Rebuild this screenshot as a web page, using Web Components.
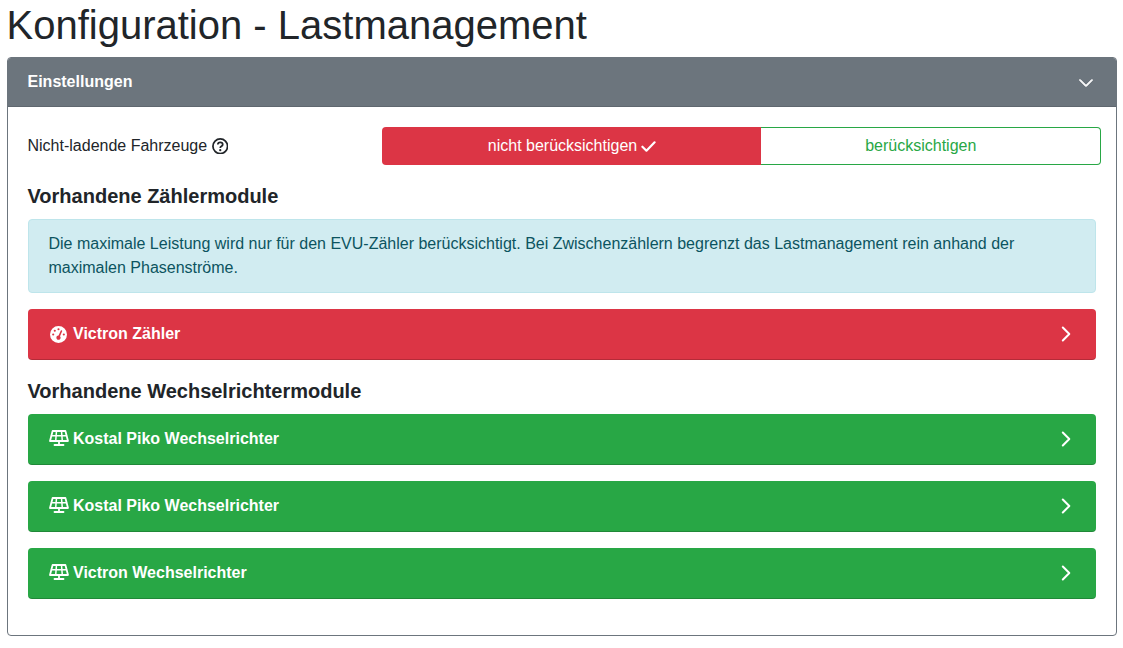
<!DOCTYPE html>
<html lang="de"><head><meta charset="utf-8"><title>Lastmanagement</title>
<style>
html,body{margin:0;padding:0;background:#fff}
body{font:16px/24px "Liberation Sans",Arial,sans-serif;color:#212529}
</style></head><body>
<app-page>
<h-title slot="title">Konfiguration - Lastmanagement</h-title>
<config-card heading="Einstellungen">
<toggle-row label="Nicht-ladende Fahrzeuge" off="nicht berücksichtigen" on="berücksichtigen"></toggle-row>
<section-heading>Vorhandene Zählermodule</section-heading>
<info-alert>Die maximale Leistung wird nur für den EVU-Zähler berücksichtigt. Bei Zwischenzählern begrenzt das Lastmanagement rein anhand der maximalen Phasenströme.</info-alert>
<module-button kind="counter">Victron Zähler</module-button>
<section-heading>Vorhandene Wechselrichtermodule</section-heading>
<module-button kind="inverter">Kostal Piko Wechselrichter</module-button>
<module-button kind="inverter">Kostal Piko Wechselrichter</module-button>
<module-button kind="inverter">Victron Wechselrichter</module-button>
</config-card>
</app-page>
<script>
const def=(n,html)=>customElements.define(n,class extends HTMLElement{connectedCallback(){if(this.shadowRoot)return;const s=this.attachShadow({mode:'open'});s.innerHTML=typeof html==='function'?html(this):html;}});
def('app-page',`<style>:host{display:block;padding:0 6.5px}</style><slot name="title"></slot><slot></slot>`);
def('h-title',`<style>:host{display:block;font-size:40px;line-height:48px;font-weight:400;margin:0 0 8px;padding-top:1px}</style><slot></slot>`);
def('config-card',h=>`<style>
:host{display:block;border:1px solid #6c757d;border-radius:4px;overflow:hidden}
.h{display:flex;align-items:center;justify-content:space-between;height:48px;background:#6c757d;border-bottom:1px solid #5f676f;color:#fff;font-weight:700;padding:0 22px 0 20px}
.h svg{display:block;margin-top:2px}
.b{padding:20px}
</style><div class="h"><span>${h.getAttribute('heading')}</span><svg width="16" height="16" viewBox="0 0 16 16"><path d="M1.65 4.65a.5.5 0 0 1 .7 0L8 10.3l5.65-5.65a.5.5 0 0 1 .7.7l-6 6a.5.5 0 0 1-.7 0l-6-6a.5.5 0 0 1 0-.7z" fill="#fff" stroke="#fff" stroke-width="1"/></svg></div><div class="b"><slot></slot></div>`);
def('toggle-row',h=>`<style>
:host{display:flex;align-items:center;margin-right:-5px;height:38px}
.l{width:354.5px;flex:none;display:flex;align-items:center;gap:4.5px}
.g{flex:1;display:flex;height:38px}
.g>div{display:flex;align-items:center;justify-content:center;box-sizing:border-box;gap:4px}
.a{width:379px;flex:none;background:#dc3545;color:#fff;border-radius:4px 0 0 4px;padding-left:1px}
.c{flex:1;border:1px solid #28a745;border-left:0;color:#28a745;border-radius:0 4px 4px 0;padding-right:19px}
svg{display:block}
</style><div class="l"><span>${h.getAttribute('label')}</span><svg width="16.5" height="16.5" viewBox="0 0 16 16" fill="none" stroke="#212529"><circle cx="8" cy="8" r="7.1" stroke-width="1.7"/><path d="M5.6 6.3C5.7 4.9 6.7 4.2 8 4.2c1.4 0 2.4.8 2.4 2 0 1-.6 1.4-1.3 1.9-.7.4-1.1.8-1.1 1.6" stroke-width="1.7"/><circle cx="8" cy="11.8" r="1.1" fill="#212529" stroke="none"/></svg></div><div class="g"><div class="a"><span>${h.getAttribute('off')}</span><svg width="15" height="15" viewBox="0 0 16 16" fill="none" stroke="#fff" stroke-width="2.3" stroke-linecap="round" stroke-linejoin="round"><path d="M1.5 8.2l4.3 4.3 8.7-9"/></svg></div><div class="c">${h.getAttribute('on')}</div></div>`);
def('section-heading',`<style>:host{display:block;font-size:20px;line-height:24px;font-weight:700;margin:19px 0 11px}</style><slot></slot>`);
def('info-alert',`<style>:host{display:block;background:#d1ecf1;border:1px solid #bee5eb;border-radius:4px;color:#0c5460;padding:12px 20px;margin-bottom:16px}</style><slot></slot>`);
const ICON={counter:`<svg width="17" height="17" viewBox="0 0 512 512" fill="#fff" style="margin-top:2px"><path d="M0 256a256 256 0 1 1 512 0A256 256 0 1 1 0 256zM288 96a32 32 0 1 0-64 0 32 32 0 1 0 64 0zM256 416c35.3 0 64-28.7 64-64c0-17.4-6.9-33.1-18.1-44.6L366 161.7c5.3-12.1-.2-26.3-12.3-31.6s-26.3 .2-31.6 12.3L257.9 288c-.6 0-1.3 0-1.9 0c-35.3 0-64 28.7-64 64s28.7 64 64 64zM176 144a32 32 0 1 0-64 0 32 32 0 1 0 64 0zM96 288a32 32 0 1 0 0-64 32 32 0 1 0 0 64zm352-32a32 32 0 1 0-64 0 32 32 0 1 0 64 0z"/></svg>`,
inverter:`<svg width="20" height="16" viewBox="0 0 20 16" fill="none" stroke="#fff" stroke-width="1.8" stroke-linejoin="round"><path d="M3.6 1h12.8l2.6 10H1z"/><path d="M1.9 5.7h16.2M7.5 1l-.8 10M12.5 1l.8 10" stroke-width="1.5"/><path d="M10 11v4M5.5 15h9" stroke-linecap="round"/></svg>`};
def('module-button',h=>`<style>
:host{display:block;margin-bottom:16px}
.r{display:flex;align-items:center;height:50px;padding:0 22px 0 20.5px;border-radius:4px;color:#fff;font-weight:700;gap:4px;border-bottom:1px solid rgba(0,0,0,.18)}
.counter{background:#dc3545}.inverter{background:#28a745}
.ic{width:21px;display:flex;justify-content:center;margin-top:-2px}
.t{flex:1}
svg{display:block}
</style><div class="r ${h.getAttribute('kind')}"><span class="ic">${ICON[h.getAttribute('kind')]}</span><span class="t"><slot></slot></span><svg width="16" height="18" viewBox="0 0 16 18" fill="none" stroke="#fff" stroke-width="2" stroke-linecap="round" stroke-linejoin="round"><path d="M4.8 2.5l6.5 6.5-6.5 6.5"/></svg></div>`);
</script>
</body></html>
